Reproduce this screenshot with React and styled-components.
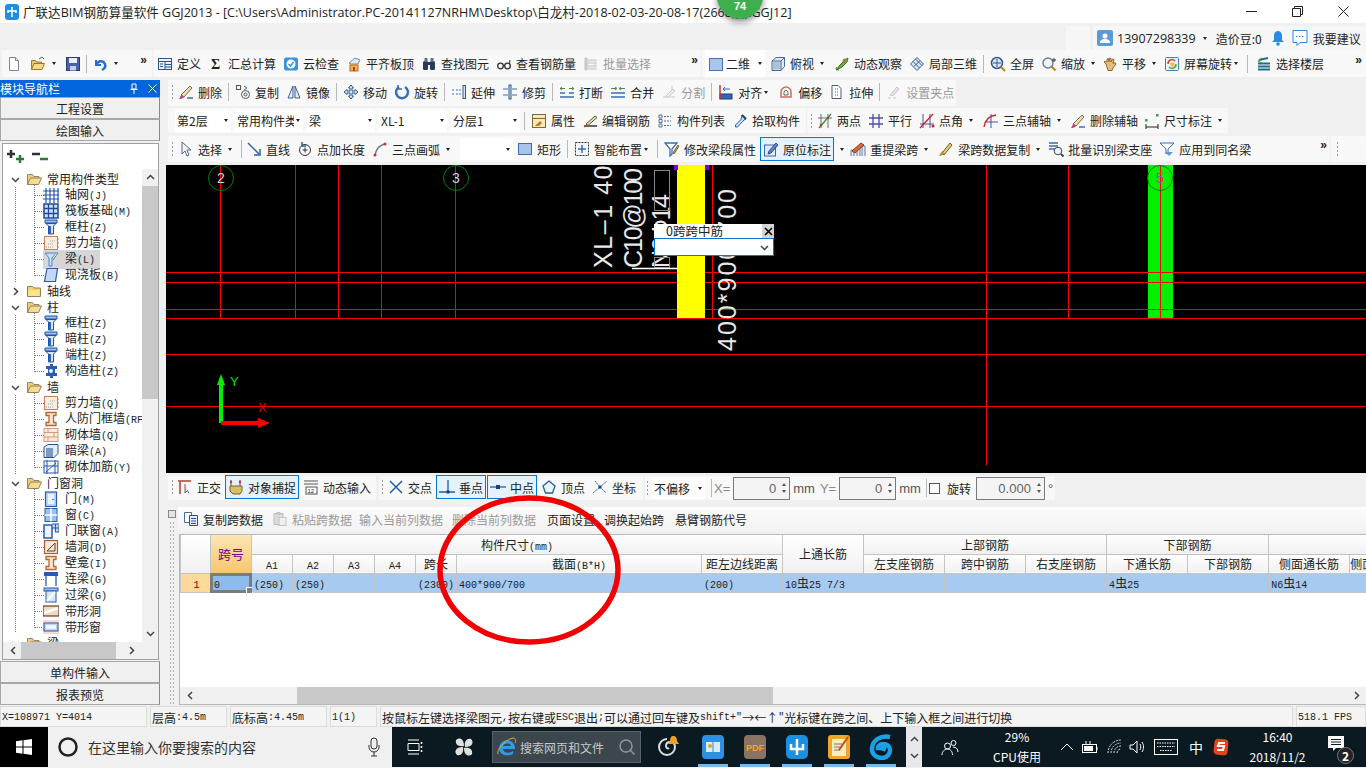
import React from 'react';
import styled, { createGlobalStyle } from 'styled-components';

const GlobalStyle = createGlobalStyle`
  html, body { margin: 0; padding: 0; background: #f0f0f0; }
  * { box-sizing: border-box; }
`;

const CJK = '"Noto Sans CJK SC", "Liberation Sans", sans-serif';

const ICONS = {
  newfile: <><path d="M3.5 1.5h6l3 3v10h-9z" fill="#fff" stroke="#7b8799" /><path d="M9.5 1.5v3h3" fill="#d8e0ea" stroke="#7b8799" /></>,
  open: <><path d="M1.5 13.5v-9h4l1 1.5h5v2" fill="#e8c56c" stroke="#9a7a2e" /><path d="M1.5 13.5l2.5-6h10.500l-2.500 6z" fill="#f6d887" stroke="#9a7a2e" /><path d="M9 3l3-2 2 2" fill="none" stroke="#3c7a3c" /></>,
  save: <><rect x="1.500" y="1.500" width="13" height="13" fill="#4a5fb0" stroke="#2b3a78" /><rect x="4" y="2" width="8" height="5" fill="#eef" /><rect x="5" y="10" width="6" height="4.500" fill="#c8cfe0" /></>,
  undo: <><path d="M4 4v5h5" fill="none" stroke="#2a6fc4" strokeWidth="2" /><path d="M4.500 8.500C6 4.500 11 4 13 8c1 3-1 5-3 6" fill="none" stroke="#2a6fc4" strokeWidth="2.500" /></>,
  define: <><rect x="1.500" y="2.500" width="13" height="11" fill="#e8f0fa" stroke="#34538a" /><path d="M1.500 5.500h13M8 5.500v8M8 8.500h6.500M8 11h6.500M3 8h3M3 10.500h3" stroke="#34538a" fill="none" /></>,
  sum: <text x="3" y="13" fontFamily="Liberation Serif" fontWeight="700" fontSize="14" fill="#222">Σ</text>,
  cloud: <><rect x="1" y="1.500" width="14" height="13" rx="2" fill="#3a94dc" /><circle cx="8" cy="8" r="4.500" fill="#fff" /><path d="M5.500 8l2 2 3-4" fill="none" stroke="#3a94dc" strokeWidth="1.500" /></>,
  level: <><path d="M3 7l6-5 5 2-2 4H5z" fill="#dfe7f0" stroke="#7a8aa0" /><rect x="4" y="9" width="8" height="6" fill="#f2b24a" stroke="#b36a1b" /><rect x="7" y="11" width="2" height="4" fill="#b3401b" /></>,
  binoc: <><rect x="2" y="5" width="5" height="9" rx="1.500" fill="#2c3a58" /><rect x="9" y="5" width="5" height="9" rx="1.500" fill="#2c3a58" /><rect x="3.500" y="2" width="3" height="4" fill="#5a7094" /><rect x="9.500" y="2" width="3" height="4" fill="#5a7094" /><rect x="6" y="6" width="4" height="3" fill="#2c3a58" /></>,
  glasses: <><circle cx="4.500" cy="10" r="2.800" fill="none" stroke="#333" strokeWidth="1.300" /><circle cx="11.500" cy="10" r="2.800" fill="none" stroke="#333" strokeWidth="1.300" /><path d="M7 9.500h2M13.500 8L14 4" stroke="#333" fill="none" /></>,
  batch: <><path d="M2 2h2v12H2zM5 4h9M5 7h9M5 10h9M5 13h9" fill="#ccc" stroke="#c4c4c4" /><rect x="5" y="5" width="7" height="7" fill="none" stroke="#d4d4d4" /></>,
  square2d: <rect x="1.500" y="2.500" width="13" height="12" fill="#aac4ee" stroke="#4a74b8" />,
  box3d: <><path d="M2 5l4-3.500h8.500v9L11 14.500H2z" fill="#dfe8f2" stroke="#4a6a90" /><path d="M2 5h9v9.500M11 5l3.500-3.500" fill="none" stroke="#4a6a90" /><rect x="3" y="6" width="7" height="7.500" fill="#a9c3de" /></>,
  orbit: <><path d="M2 14l4-5 5-5 3-2-1 4-5 5z" fill="#6fae38" stroke="#3a6e20" /><circle cx="11" cy="5" r="2.500" fill="#8c8c3c" /><path d="M3 11c-2 2 0 3 2 3" fill="none" stroke="#3a6e20" /></>,
  local3d: <><path d="M1.500 8L8 1.500 14.500 8 8 14.500z" fill="#dbe6f3" stroke="#3b5c8c" /><path d="M4 5.500l6.500 6.500M6.500 3l6.500 6.500M5 10.500L10.500 5" stroke="#3b5c8c" fill="none" /></>,
  fit: <><circle cx="7" cy="7" r="5.500" fill="#dce8f6" stroke="#33558f" strokeWidth="1.500" /><path d="M7 3v8M3 7h8" stroke="#33558f" /><path d="M11 11l4 4" stroke="#b8860b" strokeWidth="2" /></>,
  zoomer: <><circle cx="7" cy="7" r="5" fill="#edf2f8" stroke="#6b7f9a" strokeWidth="1.500" /><path d="M10.500 10.500l4 4" stroke="#b8860b" strokeWidth="2" /><path d="M13 2v4M11 4h4" stroke="#333" /></>,
  pan: <><path d="M4 8l-2-2 1-1 2 1V3l1.500-.5L7 6l.5-4 1.500.5L9 6l1.500-3 1.500.5-1 4 2-1 1 1.500-3 4-1 2.500H6z" fill="#e3bd7a" stroke="#8d6a2c" /></>,
  rot: <><rect x="1.500" y="1.500" width="13" height="13" rx="1" fill="#eaf2fa" stroke="#3b84c4" /><path d="M4 8a4 4 0 0 1 7-3" fill="none" stroke="#d04a2a" strokeWidth="1.500" /><path d="M12 8a4 4 0 0 1-7 3" fill="none" stroke="#5aa848" strokeWidth="1.500" /><rect x="6.500" y="6.500" width="4" height="4" fill="#e8c14c" /></>,
  floors: <><path d="M3 4l9-2M2 7.500h12M2 10.500h12M2 13.500h12" stroke="#1f6f8c" strokeWidth="2" fill="none" /><path d="M6 2L2 5l4 2" fill="none" stroke="#3c9a3c" /></>,
  brush: <><path d="M3 11L12 2l2 2-8 9z" fill="#eadfb4" stroke="#7a6f48" /><path d="M1 15c2 0 4-.500 5-2l-2.500-2.500C2 12 2 14 1 15z" fill="#b24a7a" /><path d="M9 14h6" stroke="#3b6fb4" strokeWidth="1.500" /></>,
  copy: <><rect x="1.500" y="1.500" width="4" height="4" fill="none" stroke="#555" /><circle cx="10.500" cy="10.500" r="4" fill="none" stroke="#555" /><circle cx="10.500" cy="10.500" r="1.500" fill="none" stroke="#555" /><path d="M9 2l3 2-3 2" fill="none" stroke="#2e6fb4" /></>,
  mirror: <><path d="M7 2L2 14h5zM9 2l5 12H9z" fill="#e6eef8" stroke="#3c5f8f" /></>,
  move: <path d="M8 1l2.500 3H9v3h3V5.500L15 8l-3 2.500V9H9v3h1.500L8 15l-2.500-3H7V9H4v1.500L1 8l3-2.500V7h3V4H5.500z" fill="#d7e5f5" stroke="#33598c" />,
  rotate: <><path d="M5 3a6 6 0 1 0 6 0" fill="none" stroke="#3a6db8" strokeWidth="2.500" /><path d="M4 1v4h4" fill="none" stroke="#3a6db8" strokeWidth="1.500" /></>,
  extend: <><path d="M1 6h2M1 10h2M5 6h6M5 10h6" stroke="#3b6fb4" strokeDasharray="2 1" fill="none" /><rect x="12" y="1.500" width="2.500" height="13" fill="#d7e5f5" stroke="#33598c" /></>,
  trim: <><path d="M1 5h5M1 11h5M10 5h5M10 11h5" stroke="#3b6fb4" fill="none" /><rect x="7" y="1" width="2" height="14" fill="#d7e5f5" stroke="#33598c" /></>,
  breakIt: <><path d="M1 9h5M10 9h5M1 13h14" stroke="#3b6fb4" strokeWidth="1.500" fill="none" /><path d="M3 6l-2-1.500L3 3M13 6l2-1.500L13 3M1 4.500h5M10 4.500h5" stroke="#4a8a4a" fill="none" /></>,
  merge: <><path d="M1 9h14M1 13h14" stroke="#3b6fb4" strokeWidth="1.500" fill="none" /><path d="M5 3l2 1.500L5 6M11 3L9 4.500 11 6M1 4.500h5M10 4.500h5" stroke="#4a8a4a" fill="none" /></>,
  split: <><path d="M2 13h12M4 13l8-8 2 2-7 6" fill="#eee" stroke="#c9c9c9" /><path d="M11 2v4" stroke="#c9c9c9" /></>,
  align: <><rect x="2" y="10" width="12" height="5" fill="#3466b8" stroke="#1d3c78" /><path d="M2 1v14" stroke="#c23a3a" strokeWidth="1.500" /><path d="M12 5H5l2-2M5 5l2 2" fill="none" stroke="#2d6fb4" /></>,
  offset: <><path d="M3 13V8a5 5 0 0 1 10 0v5z" fill="none" stroke="#d06a5a" strokeWidth="1.500" /><path d="M6 11V8.500a2 2 0 0 1 4 0V11z" fill="none" stroke="#666" /></>,
  stretch: <><path d="M3 1.500h6l3 3v10H3z" fill="#fff" stroke="#4b5b74" /><path d="M6 5h3M6 8h4M6 11h4" stroke="#4b5b74" strokeDasharray="1 1" /></>,
  gripGray: <><path d="M2 14h3M7 14h3M4 11l7-8 2 2-6 7z" fill="#e4e4e4" stroke="#c8c8c8" /></>,
  prop: <><rect x="1.500" y="1.500" width="13" height="13" fill="#fbe7b5" stroke="#7a6a3a" /><path d="M1.500 5.500h13" stroke="#7a6a3a" /><path d="M4 13l5-5 2 2-3 3z" fill="#b8801f" /></>,
  editbar: <><path d="M2 13h13" stroke="#333" strokeWidth="1.500" /><path d="M4 11l9-8 2 1.500-9 8z" fill="#e8dfb8" stroke="#55502f" /><path d="M2 14l3-2" stroke="#d0402a" strokeWidth="1.500" /></>,
  list: <><path d="M2 2h3v3H2zM2 6.500h3v3H2zM2 11h3v3H2z" fill="none" stroke="#54709a" /><path d="M7 3.500h7M7 8h7M7 12.500h7" stroke="#54709a" strokeDasharray="2 1" /></>,
  pick: <><path d="M10 2l4 4-2 1-1 1-5.500 6H3.500v-2L9 6.500z" fill="#cfe0f4" stroke="#2d5ea8" /><path d="M10 2l4 4" stroke="#193f80" strokeWidth="2" /></>,
  twopt: <><path d="M2 15L14 1M1 5h14M4 1v14M11 1v14" stroke="#6d6d6d" fill="none" /><path d="M2 15L14 1" stroke="#2f9a3a" strokeWidth="1.300" /><circle cx="4" cy="12" r="1.200" fill="#d03030" /><circle cx="11" cy="5" r="1.200" fill="#d03030" /></>,
  parallel: <path d="M1 5h14M1 11h14M5 1v14M11 1v14" stroke="#4c4cb0" strokeWidth="1.300" fill="none" />,
  ptangle: <><path d="M4 1v14M1 11h14M11 1v14" stroke="#4c4cb0" fill="none" /><path d="M1 15L14 1" stroke="#d02020" strokeWidth="1.300" /><circle cx="14" cy="13" r="1.500" fill="#d02020" /></>,
  arc3: <><path d="M1 14C2 7 6 3 13 2" fill="none" stroke="#d02020" strokeWidth="1.300" /><path d="M8 1v14M2 9h13" stroke="#4c4cb0" fill="none" /></>,
  dim: <><path d="M2 14h12M2 11v5M14 11v5" stroke="#222" fill="none" /><rect x="1" y="6" width="2.500" height="2.500" fill="#3aa040" /><rect x="12" y="1" width="2.500" height="2.500" fill="#3aa040" /></>,
  cursor: <path d="M4 1v12l3-3 2 5 2-1-2-5h4z" fill="#f2f4f8" stroke="#5a6a86" />,
  line: <><path d="M2 2l11 11" stroke="#2a5fa8" strokeWidth="1.500" /><path d="M8 14h6V8" fill="none" stroke="#2a5fa8" strokeWidth="1.500" /></>,
  addlen: <><circle cx="8" cy="9" r="5.500" fill="none" stroke="#333" /><path d="M8 6.500v5M5.500 9h5" stroke="#333" /><path d="M5 1v4h4" fill="none" stroke="#2a5fa8" strokeWidth="1.500" /></>,
  arc: <><path d="M3 14C4 8 8 4 13 3" fill="none" stroke="#6a7686" strokeWidth="1.500" /><circle cx="3" cy="14" r="1.500" fill="#d03030" /><circle cx="13" cy="3" r="1.500" fill="#d03030" /></>,
  rect: <rect x="1.500" y="2.500" width="13" height="11" fill="#a9c3ea" stroke="#3e6cb4" />,
  smart: <><rect x="1.500" y="1.500" width="13" height="13" fill="#f4f6fa" stroke="#333" strokeDasharray="2 1" /><path d="M8 4v8M4 8h8" stroke="#2e6fb4" strokeWidth="1.500" /></>,
  modseg: <><path d="M1 2h12L8 8v5l-2 2V8z" fill="#fff" stroke="#3a6db8" strokeWidth="1.300" /><path d="M9 12l5-8 1 1-5 8z" fill="#d7b13e" stroke="#7a6320" /></>,
  mark: <><rect x="1.500" y="4" width="11" height="11" fill="#e1eaf5" stroke="#3b66a8" /><path d="M6 10l7-8 2 2-7 8-3 1z" fill="#5f86c4" stroke="#2a4d8c" /></>,
  relift: <><path d="M1 15V9h3v6M7 15V7h3v8M12 15V5h3v10" fill="#dfe8f4" stroke="#6b7f9a" /><path d="M2 10l9-8 3 2-9 8z" fill="#d46a3c" stroke="#8a3f1e" /></>,
  brushcopy: <><path d="M4 12L12 2l2 2-8 10z" fill="#e6cf74" stroke="#6d5c1e" /><path d="M1 15c2 0 4-1 5-3l-2-2c-1 2-2 3-3 5z" fill="#b08e2c" /></>,
  batchid: <><path d="M1 2h9M1 5h9M1 8h6" stroke="#2e6fb4" strokeWidth="1.500" /><circle cx="10" cy="10" r="3.800" fill="#eaf2fb" stroke="#444" /><path d="M13 13l2.500 2.500" stroke="#444" strokeWidth="2" /></>,
  apply: <><path d="M1 2h14L9 8v3L7 13V8z" fill="#fff" stroke="#3a6db8" /><path d="M6 11h8l-4 4z" fill="#5f9ad8" /></>,
  ortho: <><path d="M1 2h13M3 2v13" stroke="#c46a5a" strokeWidth="2" /><path d="M8 5v9l2.500-2.500 1.500 3" fill="#ddd" stroke="#666" /></>,
  snap: <><path d="M3 1v6M12 1v6" stroke="#555" /><path d="M2 7h12v5l-2 3H5l-3-3z" fill="#d9bd6b" stroke="#7a6420" /><circle cx="3" cy="3" r="1.200" fill="#c33" /><circle cx="12" cy="3" r="1.200" fill="#c33" /></>,
  dyn: <><path d="M1 2h14M1 5h14" stroke="#555" /><rect x="3" y="8" width="11" height="7" fill="#fff" stroke="#555" /><text x="4.500" y="14" fontSize="6" fontFamily="Liberation Sans" fill="#222">12</text></>,
  cross: <path d="M2 2l12 12M14 2L2 14" stroke="#1f5fa8" strokeWidth="1.500" />,
  perp: <><path d="M0 13h16M9 1v12" stroke="#1f5fa8" strokeWidth="1.300" /><rect x="7.500" y="11.500" width="3" height="3" fill="#12408a" /></>,
  mid: <><path d="M0 8h16" stroke="#1f5fa8" strokeWidth="1.300" /><rect x="6" y="6" width="4" height="4" fill="#12408a" /></>,
  vertex: <path d="M8 2l6 5-2.500 7h-7L2 7z" fill="#eef4fb" stroke="#1f5fa8" strokeWidth="1.300" />,
  coord: <><path d="M1 14L8 8l7-6M8 8l-5-6M8 8l6 6" stroke="#1f5fa8" strokeDasharray="2 1" fill="none" /><rect x="6.500" y="6.500" width="3" height="3" fill="#12408a" /></>,
  copydata: <><path d="M1.500 1.500h7v10h-7z" fill="#fff" stroke="#4a6a9a" /><path d="M6.500 4.500h8v10h-8z" fill="#e6eef8" stroke="#2a4d8c" /><path d="M8 7.500h5M8 10h5M8 12.500h5" stroke="#2a4d8c" /></>,
  paste: <><rect x="2" y="2.500" width="9" height="11" fill="#dcdcdc" stroke="#bdbdbd" /><rect x="7" y="6.500" width="7" height="8" fill="#efefef" stroke="#c4c4c4" /><rect x="4.500" y="1" width="4" height="3" fill="#c4c4c4" /></>,
  axisgrid: <path d="M3 1v15M7 1v15M11 1v15M15 1v15M0 4h16M0 8h16M0 12h16" stroke="#1f55b8" strokeWidth="1.200" fill="none" />,
  raft: <><rect x="1" y="1" width="14" height="14" fill="#cfe0f4" stroke="#1f4a98" strokeWidth="1.500" /><path d="M1 5.500h14M1 10.500h14M5.500 1v14M10.500 1v14" stroke="#1f4a98" strokeWidth="1.300" /></>,
  col: <><path d="M2 1h12v3H2z" fill="#9cc0ec" stroke="#1f4fa8" /><path d="M3 4.500h10L10.500 7v8h-5V7z" fill="#d7e7f9" stroke="#1f4fa8" /><rect x="6" y="7" width="2" height="8" fill="#2a62c0" /></>,
  shear: <><rect x="1.500" y="1.500" width="13" height="13" fill="#f6efe4" stroke="#c9805a" /><path d="M3 12h8M5 9h6M7 6h5" stroke="#9a9a9a" strokeDasharray="1 1" /><path d="M14 4h2M14 8h2M14 12h2" stroke="#dd7a2a" /></>,
  beam: <><path d="M2 2h11L9 7v8H6V7z" fill="#c9dff4" stroke="#4a86c4" /><path d="M13 2l2 0-5 7" fill="#eef5fb" stroke="#4a86c4" /></>,
  slab: <path d="M4 1.500h10.500l-2 13H1.500z" fill="#c4d8f4" stroke="#2a5bb0" strokeWidth="1.200" />,
  gzz: <><path d="M3 3h4V1h3v2h4v3h-2v4h2v3h-4v2H7v-2H3v-3h2V6H3z" fill="#2a5bb0" /><circle cx="8" cy="8" r="2" fill="#eaf1fb" /></>,
  rf: <path d="M3 1.500h10v3h-2.500v7H13v3H3v-3h3v-7H3z" fill="#f6e6d6" stroke="#b8642a" strokeWidth="1.300" />,
  brick: <><rect x="1" y="1.500" width="14" height="13" fill="#f8ece0" stroke="#d89a78" /><path d="M1 5.500h14M1 10h14M5 1.500v4M11 5.500V10M5 10v4.500" stroke="#d89a78" /></>,
  darkbeam: <><path d="M1 4l4-2.500h10v9L11 14.500H1z" fill="#e4edf7" stroke="#32507c" /><rect x="3" y="5" width="7" height="9" fill="#7d99bd" /></>,
  wallbar: <><rect x="1" y="2" width="14" height="12" fill="#f4f8fd" stroke="#2a5bb0" /><path d="M4 1v14M12 1v14M1 7h14M3 13L13 4" stroke="#2a5bb0" /></>,
  door: <><rect x="2.500" y="1" width="11" height="14.500" fill="#bcd4f2" stroke="#2a5bb0" strokeWidth="1.200" /><rect x="5" y="3" width="6" height="10" fill="#eaf2fb" /><circle cx="10" cy="8.500" r=".8" fill="#2a5bb0" /></>,
  win: <><rect x="2" y="1.500" width="12" height="13" fill="#9cc0ec" stroke="#2a5bb0" /><path d="M8 1.500v13M2 8h12" stroke="#fff" strokeWidth="1.500" /></>,
  doorwin: <><rect x="1" y="2" width="8" height="13" fill="#eef4fb" stroke="#2a5bb0" strokeWidth="1.500" /><path d="M9 1h7v8h-4" fill="#bcd4f2" stroke="#2a5bb0" /><path d="M12.500 1v8M9 5h7" stroke="#2a5bb0" /></>,
  hole: <><rect x="1.500" y="1.500" width="13" height="13" fill="#f7e7da" stroke="#a85a30" strokeWidth="1.200" /><path d="M4 12L12 4M4 12h8V4" fill="none" stroke="#6d3a1c" /></>,
  gl: <><rect x="1" y="1" width="14" height="4" fill="#2a5bb0" /><path d="M3 1v14M13 1v14M8 1v4" stroke="#2a5bb0" strokeWidth="1.300" /></>,
  lintel: <><rect x="1" y="1" width="14" height="3" fill="#9cc0ec" stroke="#2a5bb0" /><rect x="3" y="4" width="10" height="11" fill="#d7e7f9" stroke="#2a5bb0" /><path d="M4 14L12 5" stroke="#fff" strokeWidth="2" /></>,
  striphole: <><rect x="0" y="3" width="16" height="10" fill="#f1d9c4" stroke="#6d3a1c" strokeWidth="1.200" /><path d="M1 10L15 5" stroke="#fff" strokeWidth="2.500" /></>,
  stripwin: <><rect x="0" y="1" width="16" height="14" fill="#f8d8d0" /><rect x="1" y="4" width="14" height="8" fill="#bcd4f2" stroke="#2a5bb0" /><rect x="3" y="6" width="10" height="4" fill="#eef4fb" /></>,
  folderOpen: <><path d="M1.500 13.500v-10h5l1.500 2h5v2" fill="#eccb7a" stroke="#8a8a7a" /><path d="M1.500 13.500l3-6.500h11l-3 6.500z" fill="#f8dc8e" stroke="#96825a" /></>,
  folderClosed: <><path d="M1.500 13.500v-10h5l1.500 1.500h6.500v8.500z" fill="#f6d264" stroke="#96825a" /><rect x="2.500" y="7" width="11" height="6" fill="#fbe48c" /></>,
};

const Svg = styled.svg`
  flex: none;
  display: block;
`;

const Ico = ({ name, size = 16 }) => (
  <Svg width={size} height={size} viewBox="0 0 16 16">{ICONS[name]}</Svg>
);

const LatinRun = styled.span`
  font-family: "Liberation Mono", monospace;
  font-size: 10px;
`;

// SimSun-style cells: half-width latin next to 12px hanzi
const Sim = ({ text }) => String(text).split(/([\x20-\x7e]+)/).map((s, i) =>
  /^[\x20-\x7e]/.test(s) ? <LatinRun key={i}>{s}</LatinRun> : s
);

const Root = styled.div`
  position: relative;
  width: 1366px;
  height: 768px;
  overflow: hidden;
  display: flex;
  flex-direction: column;
  background: #f0f0f0;
  font-family: ${CJK};
  font-size: 12px;
  color: #222;
`;

/* title bar */
const TitleBar = styled.div`
  height: 23px;
  background: #fff;
  display: flex;
  align-items: center;
  padding-left: 5px;
  flex: none;
`;
const TitleText = styled.div`
  margin-left: 4px;
  font-family: "Open Sans", ${CJK};
  font-size: 12.560px;
  white-space: nowrap;
  color: #222;
`;
const WinControls = styled.div`
  margin-left: auto;
  display: flex;
`;
const WinBtn = styled.div`
  width: 46px;
  height: 23px;
  display: flex;
  align-items: center;
  justify-content: center;
`;

/* account row */
const MenuBar = styled.div`
  height: 27px;
  flex: none;
  display: flex;
  justify-content: flex-end;
  align-items: stretch;
  padding-top: 3px;
`;
const BlankTab = styled.div`
  width: 24px;
  margin-right: 3px;
  background: #f6f6f6;
`;
const UserBox = styled.div`
  width: 273px;
  background: #f6f6f6;
  display: flex;
  align-items: center;
  padding-left: 4px;
  font-size: 12px;
`;
const UserNum = styled.span`
  font-family: "Open Sans", sans-serif;
  font-size: 12.500px;
  margin-left: 4px;
  color: #222;
`;
const UserText = styled.span`
  margin-left: ${p => p.$ml || 0}px;
`;

/* toolbars */
const ToolRow = styled.div`
  display: flex;
  height: ${p => p.$h || 26}px;
  margin-top: ${p => p.$mt || 0}px;
  flex: none;
  gap: 1px;
`;
const Bar = styled.div`
  display: flex;
  align-items: center;
  gap: ${p => p.$gap ?? 7}px;
  width: ${p => (p.$w ? `${p.$w}px` : 'auto')};
  flex: ${p => (p.$w ? 'none' : 1)};
  padding-left: ${p => p.$pl ?? 3}px;
  padding-bottom: ${p => p.$pb || 0}px;
  margin-left: ${p => p.$ml || 0}px;
  background: #f8f8f8;
  border-radius: 2px;
  white-space: nowrap;
`;
const Grip = styled.div`
  width: 3px;
  height: 16px;
  margin-right: -3px;
  flex: none;
  background-image: radial-gradient(#9a9a9a 0.8px, transparent 1px);
  background-size: 3px 4px;
`;
const Tool = styled.div`
  display: flex;
  align-items: center;
  gap: 4px;
  height: 24px;
  flex: none;
  margin-left: ${p => p.$ml || 0}px;
  color: ${p => (p.$gray ? '#9a9a9a' : '#222')};
  ${p => p.$active && `
    margin: 0 -3px;
    padding: 0 2px;
    border: 1px solid #0078d7;
    background: #e5f1fb;
  `}
  ${p => p.$white && `
    background: #fff;
    height: 27px;
    width: 60px;
    gap: 2px;
    padding-left: 3px;
    & > div:last-child { margin-left: auto; }
  `}
`;
const CaretBox = styled.div`
  width: 10px;
  height: 10px;
  margin-left: ${p => (p.$tight ? -5 : -1)}px;
  flex: none;
  display: flex;
  align-items: center;
  justify-content: center;
  &::after {
    content: "";
    border-left: 2.500px solid transparent;
    border-right: 2.500px solid transparent;
    border-top: 3px solid #222;
  }
`;
const Sep = styled.div`
  width: 1px;
  height: 18px;
  flex: none;
  margin: ${p => (p.$ml !== undefined ? `0 -1px 0 ${p.$ml}px` : '0 -1px')};
  background: #b8b8b8;
`;
const More = styled.div`
  margin-left: auto;
  margin-right: ${p => p.$mr || 3}px;
  font-family: "Liberation Sans", sans-serif;
  font-weight: 700;
  font-size: 12px;
  line-height: 12px;
  position: relative;
  top: -4px;
`;
const Combo = styled.div`
  width: ${p => p.$w}px;
  height: 22px;
  margin-right: ${p => p.$mr ?? -3}px;
  margin-left: ${p => p.$ml || 0}px;
  flex: none;
  display: flex;
  align-items: center;
  justify-content: space-between;
  padding: 0 0 0 2px;
  background: #fff;
  overflow: hidden;
`;
const ComboText = styled.span`
  overflow: hidden;
  white-space: nowrap;
  flex: 1;
  font-size: 12px;
`;

const renderItems = items => items.map((it, i) => {
  if (it === '|') return <Sep key={i} />;
  if (it === '=') return <Grip key={i} />;
  if (it.combo !== undefined) {
    return (
      <Combo key={i} $w={it.w} $mr={it.mr}>
        <ComboText>{it.combo}</ComboText>
        <CaretBox />
      </Combo>
    );
  }
  return (
    <Tool key={i} $gray={it.g} $active={it.a} $white={it.w} $ml={it.ml}>
      {it.i && <Ico name={it.i} />}
      {it.t && <span>{it.t}</span>}
      {it.c && <CaretBox $tight={it.c === 2} />}
    </Tool>
  );
});

const quick = [
  { i: 'newfile' }, { i: 'open', c: 1, ml: 2 }, { i: 'save' }, '|', { i: 'undo', c: 1 },
];
const mainTools = [
  { i: 'define', t: '定义' }, { i: 'sum', t: '汇总计算' }, { i: 'cloud', t: '云检查' }, { i: 'level', t: '平齐板顶' },
  { i: 'binoc', t: '查找图元' }, { i: 'glasses', t: '查看钢筋量' }, { i: 'batch', t: '批量选择', g: 1 },
];
const viewTools = [
  { i: 'square2d', t: '二维', c: 1, w: 1 }, { i: 'box3d', t: '俯视', c: 1, ml: -2 }, { i: 'orbit', t: '动态观察' }, { i: 'local3d', t: '局部三维' }, '|',
  { i: 'fit', t: '全屏' }, { i: 'zoomer', t: '缩放', c: 1 }, { i: 'pan', t: '平移', c: 1, ml: -3 }, { i: 'rot', t: '屏幕旋转', c: 2, ml: -2 }, '|', { i: 'floors', t: '选择楼层', ml: 2 },
];
const editTools = [
  '=', { i: 'brush', t: '删除' }, '|', { i: 'copy', t: '复制' }, { i: 'mirror', t: '镜像' }, '|', { i: 'move', t: '移动' }, { i: 'rotate', t: '旋转' }, '|',
  { i: 'extend', t: '延伸' }, { i: 'trim', t: '修剪' }, '|', { i: 'breakIt', t: '打断' }, { i: 'merge', t: '合并' }, { i: 'split', t: '分割', g: 1 }, '|',
  { i: 'align', t: '对齐', c: 2 }, { i: 'offset', t: '偏移' }, { i: 'stretch', t: '拉伸' }, '|', { i: 'gripGray', t: '设置夹点', g: 1 },
];
const compTools = [
  { combo: '第2层', w: 56, mr: -3 }, { combo: '常用构件类型', w: 68 }, { combo: '梁', w: 68 }, { combo: 'XL-1', w: 68 }, { combo: '分层1', w: 69, mr: -2 }, '|',
  { i: 'prop', t: '属性' }, { i: 'editbar', t: '编辑钢筋' }, { i: 'list', t: '构件列表' }, { i: 'pick', t: '拾取构件' },
];
const axisTools = [
  '=', { i: 'twopt', t: '两点' }, { i: 'parallel', t: '平行' }, { i: 'ptangle', t: '点角', c: 1 }, { i: 'arc3', t: '三点辅轴', c: 1 },
  { i: 'brush', t: '删除辅轴', ml: -1 }, { i: 'dim', t: '尺寸标注', c: 1, ml: -1 },
];
const drawTools = [
  '=', { i: 'cursor', t: '选择', c: 1 }, '|', { i: 'line', t: '直线', ml: -2 }, { i: 'addlen', t: '点加长度' }, { i: 'arc', t: '三点画弧', c: 1 },
  { combo: '', w: 53, mr: 0 }, { i: 'rect', t: '矩形', ml: -3 }, '|', { i: 'smart', t: '智能布置', c: 2 }, '|', { i: 'modseg', t: '修改梁段属性' },
  { i: 'mark', t: '原位标注', a: 1 }, { c: 1 }, { i: 'relift', t: '重提梁跨', c: 1, ml: -4 }, { i: 'brushcopy', t: '梁跨数据复制', c: 1 }, { i: 'batchid', t: '批量识别梁支座', ml: -2 }, { i: 'apply', t: '应用到同名梁' },
];
const snapA = [
  '=', { i: 'ortho', t: '正交', ml: -1 }, { i: 'snap', t: '对象捕捉', a: 1 }, { i: 'dyn', t: '动态输入' },
];
const snapB = [
  '=', { i: 'cross', t: '交点' }, { i: 'perp', t: '垂点', a: 1 }, { i: 'mid', t: '中点', a: 1 }, { i: 'vertex', t: '顶点' }, { i: 'coord', t: '坐标' },
];

/* left module panel */
const Main = styled.div`
  display: flex;
  flex: none;
  height: 625px;
  margin-top: 3px;
`;
const Nav = styled.div`
  width: 160px;
  flex: none;
  display: flex;
  flex-direction: column;
`;
const NavHead = styled.div`
  height: 17px;
  background: #0066dd;
  color: #fff;
  display: flex;
  align-items: center;
  font-size: 12px;
  line-height: 17px;
  padding-right: 3px;
`;
const NavBtn = styled.div`
  height: 22px;
  flex: none;
  display: flex;
  align-items: center;
  justify-content: center;
  background: #f0f0f0;
  border: 1px solid #a8a8a8;
  border-right-color: #888;
  font-size: 12px;
`;
const TreeBox = styled.div`
  flex: 1;
  min-height: 0;
  margin: 2px 1px 1px 2px;
  border: 1px solid #a0a0a0;
  background: #fff;
  position: relative;
  display: flex;
  flex-direction: column;
`;
const TreeTools = styled.div`
  height: 25px;
  flex: none;
  display: flex;
  align-items: center;
  padding-left: 3px;
  gap: 3px;
`;
const TreeBody = styled.div`
  flex: 1;
  min-height: 0;
  display: flex;
`;
const TreeScroll = styled.div`
  flex: 1;
  min-width: 0;
  overflow: hidden;
  position: relative;
  padding-top: 2px;
  &::before {
    content: "";
    position: absolute;
    left: 12px;
    top: 12px;
    bottom: 10px;
    border-left: 1px dotted #777;
  }
`;
const TreeRow = styled.div`
  height: 16px;
  position: relative;
  display: flex;
  align-items: center;
  white-space: nowrap;
  padding-left: ${p => (p.$child ? 40 : 6)}px;
  gap: ${p => (p.$child ? 6 : 5)}px;
  ${p => p.$child && `
    &::before {
      content: "";
      position: absolute;
      left: 31px;
      top: ${p.$first ? -2 : -8}px;
      height: ${p.$first ? 10 : 16}px;
      width: 9px;
      border-left: 1px dotted #777;
      border-bottom: 1px dotted #777;
    }
  `}
`;
const Chevron = styled.div`
  width: 12px;
  height: 16px;
  flex: none;
  display: flex;
  align-items: center;
  justify-content: center;
  background: #fff;
  position: relative;
`;
const TreeLabel = styled.span`
  line-height: 16px;
  ${p => p.$sel && `
    background: #d6d6d6;
    margin-left: -22px;
    padding-left: 22px;
    width: 57px;
  `}
`;
const SelIcon = styled.div`
  position: relative;
  z-index: 1;
`;
const VBar = styled.div`
  width: 16px;
  flex: none;
  background: #f0f0f0;
  display: flex;
  flex-direction: column;
  align-items: center;
  justify-content: space-between;
  position: relative;
  padding: 4px 0;
`;
const VThumb = styled.div`
  position: absolute;
  top: 17px;
  left: 0;
  width: 16px;
  height: 213px;
  background: #c8c8c8;
`;
const HBar = styled.div`
  height: 17px;
  flex: none;
  background: #f0f0f0;
  display: flex;
  align-items: center;
  justify-content: space-between;
  padding: 0 ${p => p.$pr || 6}px 0 6px;
  position: relative;
`;
const HThumb = styled.div`
  position: absolute;
  top: 0;
  bottom: 0;
  left: ${p => p.$l}px;
  width: ${p => p.$w}px;
  background: #c8c8c8;
`;

const Chev = ({ d }) => (
  <Svg width="9" height="9" viewBox="0 0 9 9">
    <path d={{ up: 'M1 6l3.500-3.500L8 6', down: 'M1 3l3.500 3.500L8 3', left: 'M6 1L2.500 4.500 6 8', right: 'M3 1l3.500 3.500L3 8' }[d]} fill="none" stroke="#444" strokeWidth="1.500" />
  </Svg>
);

const tree = [
  { t: '常用构件类型', open: 1, kids: [['axisgrid', '轴网(J)'], ['raft', '筏板基础(M)'], ['col', '框柱(Z)'], ['shear', '剪力墙(Q)'], ['beam', '梁(L)', 1], ['slab', '现浇板(B)']] },
  { t: '轴线', kids: [] },
  { t: '柱', open: 1, kids: [['col', '框柱(Z)'], ['col', '暗柱(Z)'], ['col', '端柱(Z)'], ['gzz', '构造柱(Z)']] },
  { t: '墙', open: 1, kids: [['shear', '剪力墙(Q)'], ['rf', '人防门框墙(RF)'], ['brick', '砌体墙(Q)'], ['darkbeam', '暗梁(A)'], ['wallbar', '砌体加筋(Y)']] },
  { t: '门窗洞', open: 1, kids: [['door', '门(M)'], ['win', '窗(C)'], ['doorwin', '门联窗(A)'], ['hole', '墙洞(D)'], ['rf', '壁龛(I)'], ['gl', '连梁(G)'], ['lintel', '过梁(G)'], ['striphole', '带形洞'], ['stripwin', '带形窗']] },
  { t: '梁', open: 1, kids: [] },
];

const TreeView = () => (
  <TreeScroll>
    {tree.map(group => (
      <React.Fragment key={group.t}>
        <TreeRow>
          <Chevron><Chev d={group.open ? 'down' : 'right'} /></Chevron>
          <Ico name={group.open ? 'folderOpen' : 'folderClosed'} />
          <TreeLabel>{group.t}</TreeLabel>
        </TreeRow>
        {group.kids.map((k, i) => (
          <TreeRow key={k[1]} $child $first={i === 0}>
            <SelIcon><Ico name={k[0]} /></SelIcon>
            <TreeLabel $sel={k[2]}><Sim text={k[1]} /></TreeLabel>
          </TreeRow>
        ))}
      </React.Fragment>
    ))}
  </TreeScroll>
);

/* workspace */
const Work = styled.div`
  flex: 1;
  min-width: 0;
  display: flex;
  flex-direction: column;
`;
const Toolbars = styled.div`
  padding-left: 8px;
  flex: none;
`;
const Canvas = styled.div`
  height: 308px;
  margin: 3px 0 0 6px;
  background: #000;
  position: relative;
  flex: none;
  overflow: hidden;
`;
const CadSvg = styled.svg`
  display: block;
`;
const SpanPopup = styled.div`
  position: absolute;
  left: 488px;
  top: 59px;
  width: 120px;
  background: #fff;
`;
const PopupHead = styled.div`
  height: 14px;
  display: flex;
  align-items: center;
  padding-left: 12px;
  font-size: 12.500px;
  line-height: 14px;
  position: relative;
`;
const PopupClose = styled.div`
  margin-left: auto;
  width: 12px;
  height: 14px;
  background: #d4d4d4;
  display: flex;
  align-items: center;
  justify-content: center;
`;
const PopupInput = styled.div`
  height: 18px;
  border: 1px solid #0078d7;
  display: flex;
  align-items: center;
  justify-content: flex-end;
  padding-right: 4px;
`;
const CadText = ({ x, y, len, size = 25, children }) => (
  <text
    transform={`translate(${x} ${y}) rotate(-90)`}
    fontFamily="Liberation Sans"
    fontSize={size}
    fill="#e8e8e8"
    textLength={len}
    lengthAdjust="spacing"
  >
    {children}
  </text>
);

const Drawing = () => (
  <CadSvg width="1200" height="308" viewBox="166 165 1200 308">
    <rect x="677" y="165" width="28" height="153" fill="#ff0" />
    <rect x="1148" y="165" width="25" height="153" fill="#00f000" />
    <rect x="674" y="165" width="4" height="5" fill="#7a00e0" />
    <rect x="705" y="165" width="4" height="5" fill="#7a00e0" />
    {[220, 295, 338, 381, 455, 712, 1068, 1160].map(x => (
      <line key={x} x1={x + 0.5} x2={x + 0.5} y1="165" y2="318" stroke="#f00" />
    ))}
    {[272, 282, 309].map(y => (
      <g key={y}>
        <line x1="166" x2="677" y1={y + 0.5} y2={y + 0.5} stroke="#f00" />
        <line x1="705" x2="1366" y1={y + 0.5} y2={y + 0.5} stroke="#f00" />
      </g>
    ))}
    {[318, 354, 406].map(y => (
      <line key={y} x1="166" x2="1366" y1={y + 0.5} y2={y + 0.5} stroke="#f00" />
    ))}
    <line x1="986.500" x2="986.500" y1="165" y2="465" stroke="#f00" />
    {[[221, '2', '#d0d8d8'], [456, '3', '#d0d0d0'], [1160, '5', '#c040a0']].map(([x, n, c]) => (
      <g key={n}>
        <circle cx={x} cy="178" r="12.500" fill="none" stroke="#008000" />
        <text x={x} y="183" textAnchor="middle" fontFamily="Liberation Sans" fontSize="14" fill={c}>{n}</text>
      </g>
    ))}
    <CadText x="612" y="268" len="118">XL–1  400</CadText>
    <CadText x="642" y="268" len="100">C10@100</CadText>
    <CadText x="670" y="268" len="74">N6Φ14</CadText>
    <CadText x="736" y="351" len="162">400*900/700</CadText>
    <rect x="654.500" y="170.500" width="15" height="40" fill="none" stroke="#888" />
    <rect x="654.500" y="257.500" width="15" height="10" fill="none" stroke="#888" />
    <line x1="632" x2="677" y1="268.500" y2="268.500" stroke="#fff" strokeWidth="1.500" />
    <rect x="219" y="385" width="4" height="38" fill="#00f000" />
    <path d="M221 374l-4 11h8z" fill="#00f000" />
    <rect x="221" y="421" width="38" height="4" fill="#f00" />
    <path d="M270 423l-12-5v10z" fill="#f00" />
    <text x="230" y="386" fontFamily="Liberation Sans" fontSize="13" fill="#00e000">Y</text>
    <text x="258" y="412" fontFamily="Liberation Sans" fontSize="13" fill="#e00000">X</text>
  </CadSvg>
);

const SpinWrap = styled.div`
  width: ${p => p.$w}px;
  height: 23px;
  flex: none;
  border: 1px solid #7a7a7a;
  background: #f4f4f4;
  display: flex;
  align-items: center;
  justify-content: flex-end;
  color: #666;
  font-family: "Liberation Sans", sans-serif;
  font-size: 13px;
  padding-right: 3px;
`;
const SpinVal = styled.span`
  margin-right: 6px;
`;
const SpinArrows = styled.div`
  display: flex;
  flex-direction: column;
  gap: 4px;
  & > i {
    display: block;
    border-left: 2.500px solid transparent;
    border-right: 2.500px solid transparent;
  }
  & > i:first-child { border-bottom: 3px solid #555; }
  & > i:last-child { border-top: 3px solid #555; }
`;
const Spin = ({ w, v }) => (
  <SpinWrap $w={w}>
    <SpinVal>{v}</SpinVal>
    <SpinArrows><i /><i /></SpinArrows>
  </SpinWrap>
);
const Unit = styled.span`
  font-family: "Liberation Sans", sans-serif;
  font-size: 13px;
  margin-left: ${p => p.$ml || 0}px;
  color: ${p => (p.$gray ? '#888' : '#555')};
  flex: none;
`;
const CheckBox = styled.div`
  width: 11px;
  height: 11px;
  flex: none;
  background: #fff;
  border: 1px solid #555;
`;
const RotateLabel = styled.span`
  margin: 0 2px 0 4px;
`;

/* lower table panel */
const Lower = styled.div`
  flex: 1;
  min-height: 0;
  margin-top: 5px;
  display: flex;
`;
const Splitter = styled.div`
  width: 18px;
  flex: none;
  position: relative;
  &::before {
    content: "";
    position: absolute;
    left: 9px;
    top: 16px;
    bottom: 0;
    width: 6px;
    background-image: radial-gradient(#b4b4b4 0.9px, transparent 1px);
    background-size: 3px 4px;
  }
`;
const SplitClose = styled.div`
  position: absolute;
  left: 8px;
  top: 5px;
  width: 8px;
  height: 8px;
  background: #e4e4e4;
  border: 1px solid #888;
`;
const Panel = styled.div`
  flex: 1;
  min-width: 0;
  display: flex;
  flex-direction: column;
`;
const PanelTools = styled.div`
  height: 24px;
  margin-top: 2px;
  flex: none;
  display: flex;
  align-items: center;
  gap: 9px;
  padding-left: 5px;
  background: linear-gradient(#fcfcfc, #f2f2f2);
  white-space: nowrap;
`;
const TableBox = styled.div`
  flex: 1;
  min-height: 0;
  margin: 3px 0 0 1px;
  border: 1px solid #b8b8b8;
  border-right: 0;
  background: #fff;
  display: flex;
  flex-direction: column;
`;
const TableClip = styled.div`
  flex: 1;
  min-height: 0;
  overflow: hidden;
`;
const Grid = styled.table`
  table-layout: fixed;
  border-collapse: collapse;
  width: 1209px;
  font-size: 12px;
`;
const Th = styled.th`
  height: ${p => p.$h || 19}px;
  padding: 0;
  font-weight: 400;
  border: 1px solid #c4c4c4;
  border-top: 0;
  background: ${p => (p.$gold ? 'linear-gradient(#fce6b4, #f5c66c)' : 'linear-gradient(#ffffff, #f0f0f0)')};
  color: ${p => (p.$gold ? '#800080' : '#222')};
  font-size: ${p => (p.$gold ? 13 : 12)}px;
  overflow: hidden;
  white-space: nowrap;
`;
const Td = styled.td`
  height: 19px;
  padding: 0 0 0 2px;
  border: 1px solid #c4c4c4;
  background: ${p => p.$bg || '#a6caf0'};
  color: ${p => p.$fg || '#222'};
  text-align: ${p => (p.$center ? 'center' : 'left')};
  position: relative;
  white-space: nowrap;
`;
const EditCell = styled.div`
  position: absolute;
  inset: -1px;
  border: 3px solid #7c7c7c;
  background: #8dbbec;
  padding-left: 1px;
  line-height: 14px;
  &::after {
    content: "";
    position: absolute;
    right: -4px;
    bottom: -4px;
    width: 5px;
    height: 5px;
    background: #7c7c7c;
    border: 1px solid #fff;
  }
`;

/* status bar */
const Status = styled.div`
  height: 21px;
  flex: none;
  margin-top: 1px;
  display: flex;
  gap: 3px;
`;
const StatusCell = styled.div`
  width: ${p => (p.$w ? `${p.$w}px` : 'auto')};
  flex: ${p => (p.$w ? 'none' : 1)};
  border: 1px solid #dcdcdc;
  background: #f4f4f4;
  display: flex;
  align-items: center;
  padding: 1px 0 0 1px;
  white-space: nowrap;
  overflow: hidden;
`;

/* taskbar */
const Taskbar = styled.div`
  height: 40px;
  flex: none;
  background: #0a1a20;
  display: flex;
  align-items: stretch;
  color: #fff;
`;
const StartBtn = styled.div`
  width: 48px;
  background: #000;
  display: flex;
  align-items: center;
  justify-content: center;
`;
const SearchBox = styled.div`
  width: 344px;
  background: #f0f0f0;
  display: flex;
  align-items: center;
  padding-left: 9px;
  color: #333;
  font-size: 14px;
`;
const SearchHint = styled.span`
  margin-left: 9px;
`;
const SearchMic = styled.div`
  margin-left: auto;
  margin-right: 11px;
  display: flex;
`;
const TaskCell = styled.div`
  width: ${p => p.$w}px;
  flex: none;
  display: flex;
  align-items: center;
  justify-content: center;
  position: relative;
  ${p => p.$open && `
    &::after {
      content: "";
      position: absolute;
      bottom: 0;
      left: 6px;
      right: 6px;
      height: 3px;
      background: #76b9ed;
    }
  `}
`;
const WebSearch = styled.div`
  width: 149px;
  margin: 4px 1px 4px 3px;
  flex: none;
  background: #3b474c;
  border: 1px solid #566267;
  display: flex;
  align-items: center;
  padding-left: 4px;
  font-size: 12px;
  color: #c8c8c8;
  gap: 3px;
`;
const WebIcon = styled.div`
  margin-left: auto;
  margin-right: 4px;
  display: flex;
`;
const Scroller = styled.div`
  width: 16px;
  margin-left: 4px;
  flex: none;
  background: #e8e8e8;
  display: flex;
  flex-direction: column;
  align-items: center;
  justify-content: space-around;
  padding: 4px 0;
`;
const TrayCell = styled(TaskCell)`
  font-size: 12px;
  line-height: 20px;
  flex-direction: column;
  text-align: center;
`;
const ImeCell = styled(TaskCell)`
  font-size: 14px;
`;
const NoteIcon = styled.div`
  margin: -6px 14px 0 0;
`;
const Badge = styled.div`
  position: absolute;
  right: 12px;
  bottom: 3px;
  width: 17px;
  height: 17px;
  border-radius: 50%;
  background: #222;
  border: 1px solid #777;
  font-size: 12px;
  font-weight: 700;
  line-height: 15px;
  text-align: center;
  color: #fff;
`;

/* overlays */
const RedRing = styled.svg`
  position: absolute;
  left: 430px;
  top: 490px;
  pointer-events: none;
`;
const ScoreBall = styled.div`
  position: absolute;
  left: 717px;
  top: -27px;
  width: 46px;
  height: 46px;
  border-radius: 50%;
  background: #3fae4f;
  box-shadow: 0 3px 6px rgba(0, 0, 0, 0.45);
  color: #fff;
  font-family: "Liberation Sans", sans-serif;
  font-weight: 700;
  font-size: 11px;
  display: flex;
  align-items: flex-end;
  justify-content: center;
  padding-bottom: 7px;
`;
const Gapped = styled.div`
  margin-left: ${p => p.$ml}px;
  display: flex;
`;

const cols = [30, 41, 41, 41, 41, 41, 41, 245, 81, 81, 81, 81, 81, 81, 81, 81, 40];

const L = ({ t }) => <Sim text={t} />;

export default function App() {
  return (
    <Root>
      <GlobalStyle />

      <TitleBar>
        <Svg width="14" height="16" viewBox="0 0 14 16">
          <rect width="14" height="16" rx="3" fill="#1c90e0" />
          <path d="M7 3v10M3.500 7h7M3 6v3M11 6v3" stroke="#fff" strokeWidth="1.500" fill="none" />
        </Svg>
        <TitleText>广联达BIM钢筋算量软件 GGJ2013 - [C:\Users\Administrator.PC-20141127NRHM\Desktop\白龙村-2018-02-03-20-08-17(2668版).GGJ12]</TitleText>
        <WinControls>
          <WinBtn><Svg width="11" height="11" viewBox="0 0 11 11"><path d="M0 5.500h11" stroke="#222" /></Svg></WinBtn>
          <WinBtn><Svg width="11" height="11" viewBox="0 0 11 11"><path d="M.5 2.500h8v8h-8zM2.500 2.500v-2h8v8h-2" fill="none" stroke="#222" /></Svg></WinBtn>
          <WinBtn><Svg width="11" height="11" viewBox="0 0 11 11"><path d="M.5.500l10 10M10.500.500l-10 10" stroke="#222" /></Svg></WinBtn>
        </WinControls>
      </TitleBar>

      <MenuBar>
        <BlankTab />
        <UserBox>
          <Svg width="16" height="16" viewBox="0 0 16 16">
            <rect width="16" height="16" rx="2" fill="#5b9bd5" />
            <circle cx="8" cy="6" r="2.500" fill="#fff" />
            <path d="M3 13c0-3 2-4 5-4s5 1 5 4z" fill="#fff" />
          </Svg>
          <UserNum>13907298339</UserNum>
          <Gapped $ml={5}><CaretBox /></Gapped>
          <UserText $ml={6}>造价豆:0</UserText>
          <Gapped $ml={9}>
            <Svg width="14" height="16" viewBox="0 0 14 16">
              <path d="M7 1c-3 0-4 3-4 5v4l-2 2h12l-2-2V6c0-2-1-5-4-5z" fill="#2a8be0" />
              <circle cx="7" cy="14" r="1.800" fill="#2a8be0" />
            </Svg>
          </Gapped>
          <Gapped $ml={7}>
            <Svg width="16" height="18" viewBox="0 0 16 18">
              <path d="M1 1.500h14v12H8l-3 3v-3H1z" fill="#fff" stroke="#2a8be0" />
              <path d="M4 7.500h8" stroke="#2a8be0" strokeDasharray="1.500 1.500" />
            </Svg>
          </Gapped>
          <UserText $ml={5}>我要建议</UserText>
        </UserBox>
      </MenuBar>

      <ToolRow $h={27}>
        <Bar $w={150} $pl={4} $gap={6} $ml={2}>
          {renderItems(quick)}
          <More $mr={5}>»</More>
        </Bar>
        <Bar $w={548} $pl={4}>
          {renderItems(mainTools)}
          <More $mr={3}>»</More>
        </Bar>
        <Bar $pl={3}>
          {renderItems(viewTools)}
          <More $mr={4}>»</More>
        </Bar>
      </ToolRow>

      <Main>
        <Nav>
          <NavHead>
            模块导航栏
            <Gapped $ml={69}>
              <Svg width="10" height="11" viewBox="0 0 10 11">
                <path d="M3 1h4v5H3zM1.500 6.500h7M5 7v4" fill="none" stroke="#fff" />
              </Svg>
            </Gapped>
            <Gapped $ml={9}>
              <Svg width="9" height="9" viewBox="0 0 9 9">
                <path d="M.5.500l8 8M8.500.500l-8 8" stroke="#fff" />
              </Svg>
            </Gapped>
          </NavHead>
          <NavBtn>工程设置</NavBtn>
          <NavBtn>绘图输入</NavBtn>
          <TreeBox>
            <TreeTools>
              <Svg width="22" height="16" viewBox="0 0 22 16">
                <path d="M5 1v8M1 5h8" stroke="#333" strokeWidth="2.500" />
                <path d="M14 6v8M10 10h8" stroke="#2c7a3a" strokeWidth="2.500" />
              </Svg>
              <Svg width="18" height="16" viewBox="0 0 18 16">
                <path d="M1 5h8" stroke="#333" strokeWidth="2.500" />
                <path d="M9 10h8" stroke="#2c7a3a" strokeWidth="2.500" />
              </Svg>
            </TreeTools>
            <TreeBody>
              <TreeView />
              <VBar>
                <VThumb />
                <Chev d="up" />
                <Chev d="down" />
              </VBar>
            </TreeBody>
            <HBar $pr={22}>
              <HThumb $l={18} $w={95} />
              <Chev d="left" />
              <Chev d="right" />
            </HBar>
          </TreeBox>
          <NavBtn>单构件输入</NavBtn>
          <NavBtn>报表预览</NavBtn>
        </Nav>

        <Work>
          <Toolbars>
            <ToolRow>
              <Bar $w={788} $pb={2}>{renderItems(editTools)}</Bar>
            </ToolRow>
            <ToolRow $mt={2} $h={25}>
              <Bar $w={638} $pl={7}>{renderItems(compTools)}</Bar>
              <Bar $w={421}>{renderItems(axisTools)}</Bar>
            </ToolRow>
            <ToolRow $mt={3}>
              <Bar $w={1162}>
                {renderItems(drawTools)}
                <More $mr={3}>»</More>
              </Bar>
              <Bar $pl={5}><Grip /></Bar>
            </ToolRow>
          </Toolbars>

          <Canvas>
            <Drawing />
            <SpanPopup>
              <PopupHead>
                0跨跨中筋
                <PopupClose>
                  <Svg width="9" height="9" viewBox="0 0 9 9"><path d="M1 1l7 7M8 1L1 8" stroke="#000" strokeWidth="1.600" /></Svg>
                </PopupClose>
              </PopupHead>
              <PopupInput><Chev d="down" /></PopupInput>
            </SpanPopup>
          </Canvas>

          <Toolbars>
            <ToolRow $mt={3} $h={24}>
              <Bar $w={208} $pb={2}>{renderItems(snapA)}</Bar>
              <Bar $w={264} $pb={2} $ml={2} $pl={2}>{renderItems(snapB)}</Bar>
              <Bar $w={410} $gap={3} $ml={1} $pl={1}>
                <Grip />
                <Combo $w={53} $mr={0} $ml={3}>
                  <ComboText>不偏移</ComboText>
                  <CaretBox />
                </Combo>
                <Sep $ml={3} />
                <Unit $gray>X=</Unit>
                <Spin w={57} v="0" />
                <Unit>mm</Unit>
                <Unit $gray $ml={2}>Y=</Unit>
                <Spin w={57} v="0" />
                <Unit>mm</Unit>
                <Sep $ml={2} />
                <CheckBox />
                <RotateLabel>旋转</RotateLabel>
                <Spin w={69} v="0.000" />
                <Unit>°</Unit>
              </Bar>
            </ToolRow>
          </Toolbars>

          <Lower>
            <Splitter><SplitClose /></Splitter>
            <Panel>
              <PanelTools>
                <Tool><Ico name="copydata" /><span>复制跨数据</span></Tool>
                <Tool $gray><Ico name="paste" /><span>粘贴跨数据</span></Tool>
                <Tool $gray $ml={-2}>输入当前列数据</Tool>
                <Tool $gray>删除当前列数据</Tool>
                <Tool $ml={2}>页面设置</Tool>
                <Tool>调换起始跨</Tool>
                <Tool $ml={2}>悬臂钢筋代号</Tool>
              </PanelTools>
              <TableBox>
                <TableClip>
                  <Grid>
                    <colgroup>
                      {cols.map((w, i) => <col key={i} style={{ width: w }} />)}
                    </colgroup>
                    <thead>
                      <tr>
                        <Th rowSpan={2} />
                        <Th rowSpan={2} $gold>跨号</Th>
                        <Th colSpan={7}><L t="构件尺寸(mm)" /></Th>
                        <Th rowSpan={2}>上通长筋</Th>
                        <Th colSpan={3}>上部钢筋</Th>
                        <Th colSpan={2}>下部钢筋</Th>
                        <Th colSpan={2} />
                      </tr>
                      <tr>
                        <Th><L t="A1" /></Th>
                        <Th><L t="A2" /></Th>
                        <Th><L t="A3" /></Th>
                        <Th><L t="A4" /></Th>
                        <Th>跨长</Th>
                        <Th><L t="截面(B*H)" /></Th>
                        <Th>距左边线距离</Th>
                        <Th>左支座钢筋</Th>
                        <Th>跨中钢筋</Th>
                        <Th>右支座钢筋</Th>
                        <Th>下通长筋</Th>
                        <Th>下部钢筋</Th>
                        <Th>侧面通长筋</Th>
                        <Th>侧面原位钢筋</Th>
                      </tr>
                    </thead>
                    <tbody>
                      <tr>
                        <Td $bg="#ffd99a" $fg="#800000" $center><L t="1" /></Td>
                        <Td><EditCell><L t="0" /></EditCell></Td>
                        <Td><L t="(250)" /></Td>
                        <Td><L t="(250)" /></Td>
                        <Td />
                        <Td />
                        <Td><L t="(2300)" /></Td>
                        <Td><L t="400*900/700" /></Td>
                        <Td><L t="(200)" /></Td>
                        <Td><L t="10虫25 7/3" /></Td>
                        <Td />
                        <Td />
                        <Td />
                        <Td><L t="4虫25" /></Td>
                        <Td />
                        <Td><L t="N6虫14" /></Td>
                        <Td />
                      </tr>
                    </tbody>
                  </Grid>
                </TableClip>
                <HBar $pr={5}>
                  <HThumb $l={117} $w={476} />
                  <Chev d="left" />
                  <Chev d="right" />
                </HBar>
              </TableBox>
            </Panel>
          </Lower>
        </Work>
      </Main>

      <Status>
        <StatusCell $w={147}><L t="X=108971 Y=4014" /></StatusCell>
        <StatusCell $w={77}><L t="层高:4.5m" /></StatusCell>
        <StatusCell $w={97}><L t="底标高:4.45m" /></StatusCell>
        <StatusCell $w={47}><L t="1(1)" /></StatusCell>
        <StatusCell><L t={'按鼠标左键选择梁图元,按右键或ESC退出;可以通过回车键及shift+"→←↑"光标键在跨之间、上下输入框之间进行切换'} /></StatusCell>
        <StatusCell $w={70}><L t="518.1 FPS" /></StatusCell>
      </Status>

      <Taskbar>
        <StartBtn>
          <Svg width="16" height="16" viewBox="0 0 16 16">
            <path d="M0 2.200l6.500-.9v6.200H0zM7.500 1.200L16 0v7.500H7.500zM0 8.500h6.500v6.200L0 13.800zM7.500 8.500H16V16l-8.500-1.200z" fill="#fff" />
          </Svg>
        </StartBtn>
        <SearchBox>
          <Svg width="22" height="22" viewBox="0 0 22 22">
            <circle cx="11" cy="11" r="8.500" fill="none" stroke="#222" strokeWidth="2.500" />
          </Svg>
          <SearchHint>在这里输入你要搜索的内容</SearchHint>
          <SearchMic>
            <Svg width="14" height="20" viewBox="0 0 14 20">
              <rect x="4" y="1" width="6" height="11" rx="3" fill="none" stroke="#333" />
              <path d="M2 8v2a5 5 0 0 0 10 0V8M7 15v4M4 19h6" fill="none" stroke="#333" />
            </Svg>
          </SearchMic>
        </SearchBox>
        <TaskCell $w={46}>
          <Svg width="16" height="16" viewBox="0 0 16 16">
            <path d="M1 1h11M1 15h11M1 4.500h11v7H1z" fill="none" stroke="#fff" />
            <path d="M14.500 3v2M14.500 7v2M14.500 11v2" stroke="#fff" strokeWidth="1.500" />
          </Svg>
        </TaskCell>
        <TaskCell $w={51}>
          <Svg width="22" height="22" viewBox="0 0 22 22">
            <path d="M11 10C5 11 2 8 3 4c3-3 8-2 8 6zM12 11c-1-6 2-9 6-8 3 3 2 8-6 8zM11 12c6-1 9 2 8 6-3 3-8 2-8-6zM10 11c1 6-2 9-6 8-3-3-2-8 6-8z" fill="#e0e0e0" />
          </Svg>
        </TaskCell>
        <WebSearch>
          <Svg width="20" height="20" viewBox="0 0 20 20">
            <path d="M2 11a8 8 0 0 1 15.500-2.500c.5 1 .5 2 .5 3.500H6c.5 4 6 5 10 2v3c-6 3-14 1-14-6zM6 9h8c-.5-3.500-7-3.500-8 0z" fill="#2f9ae8" />
            <path d="M1 17C-1 14 7 3 16 1c3 0 3 3 2 5" fill="none" stroke="#e8a838" strokeWidth="1" />
          </Svg>
          <span>搜索网页和文件</span>
          <WebIcon>
            <Svg width="18" height="18" viewBox="0 0 18 18">
              <circle cx="8" cy="8" r="6" fill="none" stroke="#8e979b" strokeWidth="1.500" />
              <path d="M12.500 12.500l4 4" stroke="#8e979b" strokeWidth="1.500" />
            </Svg>
          </WebIcon>
        </WebSearch>
        <TaskCell $w={50}>
          <Svg width="28" height="26" viewBox="0 0 28 26">
            <path d="M14 5a8 8 0 1 0 8 8c0-3-2-5-5-5s-4 2-4 4 2 3 3 2" fill="none" stroke="#ddd" strokeWidth="2" />
            <path d="M20 2c3 0 4 2 4 5l2 3h-11l2-3c0-3 1-5 3-5z" fill="#f0a020" />
          </Svg>
        </TaskCell>
        <TaskCell $w={42} $open>
          <Svg width="24" height="26" viewBox="0 0 24 26">
            <rect x="1" y="1" width="22" height="24" rx="4" fill="#2f8fe0" />
            <path d="M5 8h14v10H5z" fill="#d8ecfa" />
            <path d="M12 8v10" stroke="#2f8fe0" />
            <circle cx="9" cy="12" r="2" fill="#e8a030" />
          </Svg>
        </TaskCell>
        <TaskCell $w={42} $open>
          <Svg width="24" height="26" viewBox="0 0 24 26">
            <rect x="1" y="1" width="22" height="24" rx="4" fill="#8a7360" />
            <text x="12" y="17" textAnchor="middle" fontFamily="Liberation Sans" fontWeight="700" fontSize="9" fill="#f0a830">PDF</text>
          </Svg>
        </TaskCell>
        <TaskCell $w={42} $open>
          <Svg width="24" height="26" viewBox="0 0 24 26">
            <rect x="1" y="1" width="22" height="24" rx="5" fill="#1c90e0" />
            <path d="M12 5v16M6 10v5h12v-5" fill="none" stroke="#fff" strokeWidth="2.500" />
          </Svg>
        </TaskCell>
        <TaskCell $w={42} $open>
          <Svg width="24" height="26" viewBox="0 0 24 26">
            <rect x="1" y="1" width="22" height="24" rx="3" fill="#f0a428" />
            <rect x="5" y="5" width="14" height="17" fill="#fbeac0" />
            <path d="M7 10h8M7 13h8M7 16h6" stroke="#777" />
            <path d="M12 16L21 3" stroke="#c84a1e" strokeWidth="2" />
          </Svg>
        </TaskCell>
        <TaskCell $w={42} $open>
          <Svg width="24" height="26" viewBox="0 0 24 26">
            <path d="M21 3C12 1 3 6 3 15c0 6 5 9 10 9s8-4 8-8-3-6-7-6c-3 0-5 2-5 4l6 0-1 3" fill="none" stroke="#19a0e6" strokeWidth="4.500" />
          </Svg>
        </TaskCell>
        <Scroller>
          <Chev d="up" />
          <Chev d="down" />
        </Scroller>
        <TaskCell $w={55}>
          <Svg width="18" height="18" viewBox="0 0 18 18">
            <circle cx="6.500" cy="8" r="3" fill="none" stroke="#fff" />
            <path d="M1 17c0-4 3-6 5.500-6s5 2 5 6" fill="none" stroke="#fff" />
            <circle cx="12.500" cy="5" r="2.500" fill="none" stroke="#fff" />
            <path d="M12 9c3 0 5 2 5 5" fill="none" stroke="#fff" />
          </Svg>
        </TaskCell>
        <TrayCell $w={80}>
          <span>29%</span>
          <span>CPU使用</span>
        </TrayCell>
        <TaskCell $w={20}><Svg width="14" height="8" viewBox="0 0 14 8"><path d="M1 7l6-6 6 6" fill="none" stroke="#fff" /></Svg></TaskCell>
        <TaskCell $w={26}>
          <Svg width="18" height="14" viewBox="0 0 18 14">
            <rect x="1.500" y="4.500" width="14" height="8" fill="none" stroke="#fff" />
            <rect x="3" y="6" width="9" height="5" fill="#fff" />
            <path d="M16 7v3M5 1v3M9 1v3" stroke="#fff" />
          </Svg>
        </TaskCell>
        <TaskCell $w={24}>
          <Svg width="16" height="16" viewBox="0 0 16 16">
            <path d="M1 14a13 13 0 0 1 13-13M4 14a10 10 0 0 1 10-10M7 14a7 7 0 0 1 7-7M10 14a4 4 0 0 1 4-4" fill="none" stroke="#ddd" strokeDasharray="2 1" />
          </Svg>
        </TaskCell>
        <TaskCell $w={20}>
          <Svg width="16" height="16" viewBox="0 0 16 16">
            <path d="M1 6h3l4-4v12l-4-4H1zM11 5c1 2 1 4 0 6M13 3c2 3 2 7 0 10" fill="none" stroke="#fff" />
          </Svg>
        </TaskCell>
        <TaskCell $w={38}>
          <Svg width="24" height="16" viewBox="0 0 24 16">
            <rect x=".5" y=".5" width="23" height="15" fill="none" stroke="#fff" />
            <path d="M3 4h18M3 7.500h18M6 11.500h12" stroke="#fff" strokeDasharray="1.500 1" />
          </Svg>
        </TaskCell>
        <ImeCell $w={22}>中</ImeCell>
        <TaskCell $w={28}>
          <Svg width="16" height="18" viewBox="0 0 16 18">
            <rect x="1" y="1" width="14" height="16" rx="4" fill="#e8411e" transform="rotate(6 8 9)" />
            <path d="M12 5H6l-1 3h6l-1 4H4" fill="none" stroke="#fff" strokeWidth="2.200" />
          </Svg>
        </TaskCell>
        <TrayCell $w={85}>
          <span>16:40</span>
          <span>2018/11/2</span>
        </TrayCell>
        <TaskCell $w={46}>
          <NoteIcon>
            <Svg width="16" height="16" viewBox="0 0 16 16">
              <path d="M0 0h16v12H8l-3 3v-3H0z" fill="#fff" />
              <path d="M3 3.500h10M3 6h10M3 8.500h10" stroke="#0a1a20" />
            </Svg>
          </NoteIcon>
          <Badge>2</Badge>
        </TaskCell>
      </Taskbar>

      <ScoreBall>74</ScoreBall>
      <RedRing width="200" height="160" viewBox="0 0 200 160">
        <ellipse cx="99" cy="80" rx="89" ry="72" fill="none" stroke="#f00000" strokeWidth="5.500" />
      </RedRing>
    </Root>
  );
}
